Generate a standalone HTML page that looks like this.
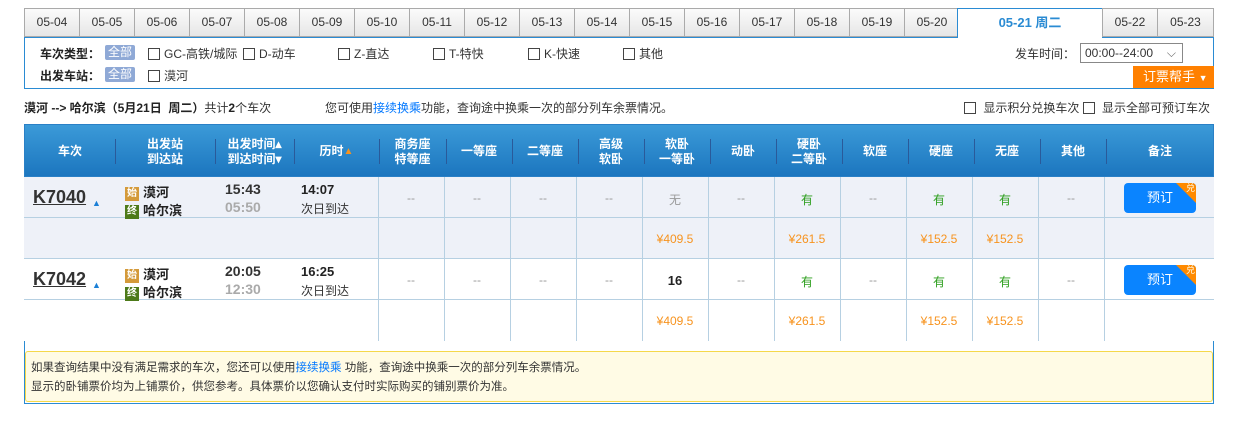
<!DOCTYPE html>
<html><head><meta charset="utf-8"><style>
*{margin:0;padding:0;box-sizing:border-box}
body{width:1254px;height:443px;background:#fff;font-family:"Liberation Sans","Noto Sans CJK SC",sans-serif;font-size:12px;color:#333;position:relative;overflow:hidden}
.a{position:absolute;white-space:nowrap}
.tab{position:absolute;top:8px;height:29px;width:55px;border:1px solid #aaa;border-right:none;background:linear-gradient(#fbfbfb,#e6e6e6);text-align:center;line-height:27px;font-size:12px;color:#333}
.cb{display:inline-block;width:12px;height:12px;border:1px solid #444;vertical-align:-2px;margin-right:4px;background:#fff}
.all{display:inline-block;background:#8fa9d6;color:#fff;padding:0 3px;line-height:15px;border-radius:2px}
.b{font-weight:bold;color:#222}
.hd{position:absolute;top:124px;left:24px;width:1190px;height:53px;background:linear-gradient(#3b9ad8,#1c76bf);border:1px solid #2a80c6}
.hc{position:absolute;top:0;height:53px;display:flex;align-items:center;justify-content:center;text-align:center;color:#fff;font-weight:bold;font-size:12px;line-height:15px}
.sep{position:absolute;top:14px;width:1px;height:25px;background:#2a5a9a}
.row{position:absolute;left:24px;width:1190px;height:41px;border-bottom:1px solid #b6d0e2}
.vl{position:absolute;width:1px;background:#b6d0e2}
.c{position:absolute;width:66px;text-align:center;font-size:12px}
.dash{color:#999}
.g{color:#2a9d1a}
.p{color:#f7931e}
.btn{position:absolute;left:1124px;width:72px;height:30px;background:#0a84ff;border-radius:4px;color:#fff;text-align:center;line-height:30px;font-size:13px;overflow:hidden}
.btn i{position:absolute;right:0;top:0;width:0;height:0;border-top:20px solid #ff8a00;border-left:20px solid transparent}
.btn b{position:absolute;right:1px;top:-10px;font-size:9px;font-weight:normal;color:#ffe}
.tag{display:inline-block;width:14px;height:14px;font-size:10px;line-height:14px;text-align:center;color:#fff;vertical-align:1px;margin-right:4px}
.tn{position:absolute;left:33px;font-size:18px;font-weight:bold;text-decoration:underline;color:#333}
</style></head><body>
<div class="tab" style="left:24px">05-04</div><div class="tab" style="left:79px">05-05</div><div class="tab" style="left:134px">05-06</div><div class="tab" style="left:189px">05-07</div><div class="tab" style="left:244px">05-08</div><div class="tab" style="left:299px">05-09</div><div class="tab" style="left:354px">05-10</div><div class="tab" style="left:409px">05-11</div><div class="tab" style="left:464px">05-12</div><div class="tab" style="left:519px">05-13</div><div class="tab" style="left:574px">05-14</div><div class="tab" style="left:629px">05-15</div><div class="tab" style="left:684px">05-16</div><div class="tab" style="left:739px">05-17</div><div class="tab" style="left:794px">05-18</div><div class="tab" style="left:849px">05-19</div><div class="tab" style="left:904px">05-20</div>
<div class="a" style="left:957px;top:8px;width:146px;height:30px;border:1px solid #2a8bd3;border-bottom:none;background:#fff;text-align:center;line-height:28px;color:#2a8bd3;font-weight:bold;font-size:13px">05-21 周二</div>
<div class="tab" style="left:1102px">05-22</div><div class="tab" style="left:1157px;width:57px;border-right:1px solid #aaa">05-23</div>
<div class="a" style="left:24px;top:37px;width:1190px;height:52px;border:1px solid #2a8bd3;border-top:none"></div>
<div class="a" style="left:24px;top:37px;width:933px;height:1px;background:#2a8bd3"></div>
<div class="a" style="left:1102px;top:37px;width:112px;height:1px;background:#2a8bd3"></div>
<div class="a b" style="left:40px;top:45px">车次类型：</div><div class="a" style="left:105px;top:45px"><span class="all">全部</span></div>
<div class="a" style="left:148px;top:45px"><span class="cb"></span>GC-高铁/城际</div>
<div class="a" style="left:243px;top:45px"><span class="cb"></span>D-动车</div>
<div class="a" style="left:338px;top:45px"><span class="cb"></span>Z-直达</div>
<div class="a" style="left:433px;top:45px"><span class="cb"></span>T-特快</div>
<div class="a" style="left:528px;top:45px"><span class="cb"></span>K-快速</div>
<div class="a" style="left:623px;top:45px"><span class="cb"></span>其他</div>
<div class="a b" style="left:40px;top:67px">出发车站：</div><div class="a" style="left:105px;top:67px"><span class="all">全部</span></div>
<div class="a" style="left:148px;top:67px"><span class="cb"></span>漠河</div>
<div class="a" style="left:1015px;top:45px">发车时间：</div>
<div class="a" style="left:1080px;top:43px;width:103px;height:20px;border:1px solid #888;line-height:18px;padding-left:4px">00:00--24:00<span style="position:absolute;right:6px;top:0;color:#666">⌵</span></div>
<div class="a" style="left:1133px;top:66px;width:81px;height:22px;background:#ff8000;color:#fff;line-height:22px;padding-left:10px;font-size:13px">订票帮手 <span style="font-size:9px">▼</span></div>
<div class="a" style="left:24px;top:99px;font-size:12px"><b class="b">漠河 --&gt; 哈尔滨（5月21日&nbsp; 周二）</b>共计<b class="b">2</b>个车次</div>
<div class="a" style="left:325px;top:99px">您可使用<span style="color:#0077ff">接续换乘</span>功能，查询途中换乘一次的部分列车余票情况。</div>
<div class="a" style="left:964px;top:99px"><span class="cb"></span> 显示积分兑换车次 <span class="cb"></span> 显示全部可预订车次</div>

<div class="hd">
<div class="hc" style="left:0;width:90px">车次</div><div class="sep" style="left:90px"></div>
<div class="hc" style="left:90px;width:100px">出发站<br>到达站</div><div class="sep" style="left:190px"></div>
<div class="hc" style="left:190px;width:79px">出发时间▴<br>到达时间▾</div><div class="sep" style="left:269px"></div>
<div class="hc" style="left:269px;width:85px">历时 <span style="color:#f7931e;font-size:10px">▲</span></div><div class="sep" style="left:354px"></div>
<div class="hc" style="left:354px;width:67px">商务座<br>特等座</div><div class="sep" style="left:421px"></div>
<div class="hc" style="left:421px;width:66px">一等座</div><div class="sep" style="left:487px"></div>
<div class="hc" style="left:487px;width:66px">二等座</div><div class="sep" style="left:553px"></div>
<div class="hc" style="left:553px;width:66px">高级<br>软卧</div><div class="sep" style="left:619px"></div>
<div class="hc" style="left:619px;width:66px">软卧<br>一等卧</div><div class="sep" style="left:685px"></div>
<div class="hc" style="left:685px;width:66px">动卧</div><div class="sep" style="left:751px"></div>
<div class="hc" style="left:751px;width:66px">硬卧<br>二等卧</div><div class="sep" style="left:817px"></div>
<div class="hc" style="left:817px;width:66px">软座</div><div class="sep" style="left:883px"></div>
<div class="hc" style="left:883px;width:66px">硬座</div><div class="sep" style="left:949px"></div>
<div class="hc" style="left:949px;width:66px">无座</div><div class="sep" style="left:1015px"></div>
<div class="hc" style="left:1015px;width:66px">其他</div><div class="sep" style="left:1081px"></div>
<div class="hc" style="left:1081px;width:108px">备注</div>
</div>
<div class="a" style="left:24px;top:177px;width:1px;height:227px;background:#2a8bd3"></div>
<div class="a" style="left:1213px;top:177px;width:1px;height:227px;background:#2a8bd3"></div>
<div class="a" style="left:24px;top:403px;width:1190px;height:1px;background:#2a8bd3"></div>

<div class="row" style="top:177px;background:#eef1f8"></div>
<div class="row" style="top:218px;background:#eef1f8"></div>
<div class="row" style="top:259px;background:#fff"></div>
<div class="row" style="top:300px;background:#fff;border-bottom:none"></div>

<div class="vl" style="left:378px;top:177px;height:164px"></div>
<div class="vl" style="left:444px;top:177px;height:164px"></div><div class="vl" style="left:510px;top:177px;height:164px"></div><div class="vl" style="left:576px;top:177px;height:164px"></div><div class="vl" style="left:642px;top:177px;height:164px"></div><div class="vl" style="left:708px;top:177px;height:164px"></div><div class="vl" style="left:774px;top:177px;height:164px"></div><div class="vl" style="left:840px;top:177px;height:164px"></div><div class="vl" style="left:906px;top:177px;height:164px"></div><div class="vl" style="left:972px;top:177px;height:164px"></div><div class="vl" style="left:1038px;top:177px;height:164px"></div><div class="vl" style="left:1104px;top:177px;height:164px"></div>

<!-- row1 -->
<div class="tn" style="top:187px">K7040</div>
<div class="a" style="left:92px;top:198px;color:#1a7fd6;font-size:9px">▲</div>
<div class="a b" style="left:125px;top:182px;font-size:13px"><span class="tag" style="background:#d49a3a">始</span>漠河</div>
<div class="a b" style="left:125px;top:200px;font-size:13px"><span class="tag" style="background:#4d7a1a">终</span>哈尔滨</div>
<div class="a" style="left:225px;top:181px;font-weight:bold;font-size:14px;color:#333">15:43</div>
<div class="a" style="left:225px;top:199px;font-weight:bold;font-size:14px;color:#aaa">05:50</div>
<div class="a b" style="left:301px;top:182px;font-size:13px">14:07</div>
<div class="a" style="left:301px;top:200px">次日到达</div>
<div class="c dash" style="left:378px;top:191px">--</div><div class="c dash" style="left:444px;top:191px">--</div><div class="c dash" style="left:510px;top:191px">--</div><div class="c dash" style="left:576px;top:191px">--</div>
<div class="c dash" style="left:642px;top:191px">无</div><div class="c dash" style="left:708px;top:191px">--</div><div class="c g" style="left:774px;top:191px">有</div><div class="c dash" style="left:840px;top:191px">--</div><div class="c g" style="left:906px;top:191px">有</div><div class="c g" style="left:972px;top:191px">有</div><div class="c dash" style="left:1038px;top:191px">--</div>
<div class="btn" style="top:183px"><i></i><b>兑</b>预订</div>
<div class="c p" style="left:642px;top:232px">¥409.5</div><div class="c p" style="left:774px;top:232px">¥261.5</div><div class="c p" style="left:906px;top:232px">¥152.5</div><div class="c p" style="left:972px;top:232px">¥152.5</div>
<!-- row2 -->
<div class="tn" style="top:269px">K7042</div>
<div class="a" style="left:92px;top:280px;color:#1a7fd6;font-size:9px">▲</div>
<div class="a b" style="left:125px;top:264px;font-size:13px"><span class="tag" style="background:#d49a3a">始</span>漠河</div>
<div class="a b" style="left:125px;top:282px;font-size:13px"><span class="tag" style="background:#4d7a1a">终</span>哈尔滨</div>
<div class="a" style="left:225px;top:263px;font-weight:bold;font-size:14px;color:#333">20:05</div>
<div class="a" style="left:225px;top:281px;font-weight:bold;font-size:14px;color:#aaa">12:30</div>
<div class="a b" style="left:301px;top:264px;font-size:13px">16:25</div>
<div class="a" style="left:301px;top:282px">次日到达</div>
<div class="c dash" style="left:378px;top:273px">--</div><div class="c dash" style="left:444px;top:273px">--</div><div class="c dash" style="left:510px;top:273px">--</div><div class="c dash" style="left:576px;top:273px">--</div>
<div class="c b" style="left:642px;top:273px;font-size:13px">16</div><div class="c dash" style="left:708px;top:273px">--</div><div class="c g" style="left:774px;top:273px">有</div><div class="c dash" style="left:840px;top:273px">--</div><div class="c g" style="left:906px;top:273px">有</div><div class="c g" style="left:972px;top:273px">有</div><div class="c dash" style="left:1038px;top:273px">--</div>
<div class="btn" style="top:265px"><i></i><b>兑</b>预订</div>
<div class="c p" style="left:642px;top:314px">¥409.5</div><div class="c p" style="left:774px;top:314px">¥261.5</div><div class="c p" style="left:906px;top:314px">¥152.5</div><div class="c p" style="left:972px;top:314px">¥152.5</div>

<div class="a" style="left:25px;top:351px;width:1188px;height:51px;background:#fffbe5;border:1px solid #f5d84a;border-radius:3px;padding:7px 0 0 5px;line-height:19px;font-size:11.5px;color:#333">如果查询结果中没有满足需求的车次，您还可以使用<span style="color:#0077ff">接续换乘</span> 功能，查询途中换乘一次的部分列车余票情况。<br>显示的卧铺票价均为上铺票价，供您参考。具体票价以您确认支付时实际购买的铺别票价为准。</div>
</body></html>
